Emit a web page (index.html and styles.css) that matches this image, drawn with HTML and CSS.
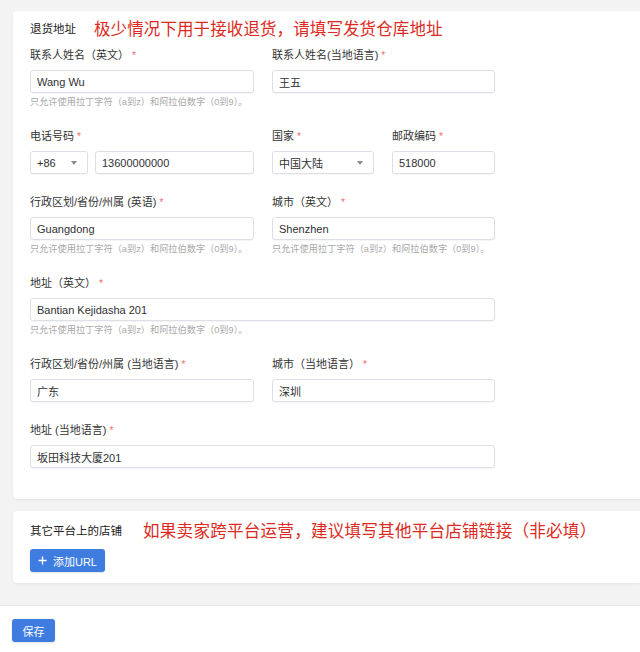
FILE: index.html
```html
<!DOCTYPE html>
<html lang="zh-CN">
<head>
<meta charset="utf-8">
<title>退货地址</title>
<link rel="stylesheet" href="styles.css">
</head>
<body>
<div class="page">
  <section class="card card-main">
    <div class="card-head">
      <span class="card-title">退货地址</span>
      <span class="note">极少情况下用于接收退货，请填写发货仓库地址</span>
    </div>
    <div class="form">
      <div class="field">
        <label class="label">联系人姓名（英文）<span class="req">*</span></label>
        <input class="input" value="Wang Wu">
        <div class="help">只允许使用拉丁字符（a到z）和阿拉伯数字（0到9）。</div>
      </div>
      <div class="field">
        <label class="label">联系人姓名(当地语言)<span class="req">*</span></label>
        <input class="input" value="王五">
      </div>

      <div class="field">
        <label class="label">电话号码<span class="req">*</span></label>
        <div class="phone">
          <div class="select select-code"><span>+86</span><span class="caret"></span></div>
          <input class="input" value="13600000000">
        </div>
      </div>
      <div class="field-pair">
        <div class="field">
          <label class="label">国家<span class="req">*</span></label>
          <div class="select"><span>中国大陆</span><span class="caret"></span></div>
        </div>
        <div class="field">
          <label class="label">邮政编码<span class="req">*</span></label>
          <input class="input" value="518000">
        </div>
      </div>

      <div class="field">
        <label class="label">行政区划/省份/州属 (英语)<span class="req">*</span></label>
        <input class="input" value="Guangdong">
        <div class="help">只允许使用拉丁字符（a到z）和阿拉伯数字（0到9）。</div>
      </div>
      <div class="field">
        <label class="label">城市（英文）<span class="req">*</span></label>
        <input class="input" value="Shenzhen">
        <div class="help">只允许使用拉丁字符（a到z）和阿拉伯数字（0到9）。</div>
      </div>

      <div class="field field-wide">
        <label class="label">地址（英文）<span class="req">*</span></label>
        <input class="input" value="Bantian Kejidasha 201">
        <div class="help">只允许使用拉丁字符（a到z）和阿拉伯数字（0到9）。</div>
      </div>

      <div class="field">
        <label class="label">行政区划/省份/州属 (当地语言)<span class="req">*</span></label>
        <input class="input" value="广东">
      </div>
      <div class="field">
        <label class="label">城市（当地语言）<span class="req">*</span></label>
        <input class="input" value="深圳">
      </div>

      <div class="field field-wide">
        <label class="label">地址 (当地语言)<span class="req">*</span></label>
        <input class="input" value="坂田科技大厦201">
      </div>
    </div>
  </section>

  <section class="card card-shops">
    <div class="card-head">
      <span class="card-title">其它平台上的店铺</span>
      <span class="note note-2">如果卖家跨平台运营，建议填写其他平台店铺链接（非必填）</span>
    </div>
    <button class="btn btn-add" type="button">
      <svg class="plus" width="9" height="9" viewBox="0 0 9 9"><path d="M4.5 0.5v8M0.5 4.5h8" stroke="#fff" stroke-width="1.4" fill="none"/></svg>
      <span>添加URL</span>
    </button>
  </section>
</div>
<footer class="footer">
  <button class="btn btn-save" type="button">保存</button>
</footer>
</body>
</html>
```
FILE: styles.css
```css
* { box-sizing: border-box; }

html, body {
  margin: 0;
  background: #ffffff;
}

body {
  font-family: "Liberation Sans", "Noto Sans CJK SC", sans-serif;
  color: #303133;
}

.page {
  background: #f3f3f4;
  padding: 11px 0 22px 13px;
}

.card {
  background: #ffffff;
  border-radius: 4px 0 0 4px;
  box-shadow: 0 1px 3px rgba(0, 0, 0, 0.06);
}

.card-main {
  padding: 7px 0 31px 17px;
}

.card-shops {
  margin-top: 12px;
  padding: 9px 0 11px 17px;
}

.card-head {
  display: flex;
  align-items: center;
  height: 20px;
  margin-bottom: 10px;
}

.card-shops .card-head {
  margin-bottom: 9px;
}

.card-title {
  font-size: 11.5px;
  color: #222;
  margin-right: 18px;
  white-space: nowrap;
}

.card-shops .card-title {
  margin-right: 21px;
}

.note {
  font-size: 16.5px;
  color: #dc2a22;
  white-space: nowrap;
  letter-spacing: 0.1px;
}

.note-2 {
  font-size: 16.6px;
  letter-spacing: 0.2px;
}

.form {
  display: grid;
  grid-template-columns: 224px 223px;
  column-gap: 18px;
  row-gap: 21px;
  align-items: start;
}

.field {
  display: flex;
  flex-direction: column;
  min-width: 0;
}

.field-wide {
  grid-column: 1 / 3;
}

.field-pair {
  display: grid;
  grid-template-columns: 102px 103px;
  column-gap: 18px;
}

.label {
  display: block;
  height: 14px;
  line-height: 14px;
  font-size: 11px;
  color: #333;
  margin-bottom: 8px;
  white-space: nowrap;
}

.req {
  color: #ee6b6b;
  font-size: 10px;
  margin-left: 3px;
}

.input {
  display: block;
  width: 100%;
  height: 23px;
  border: 1px solid #dcdfe6;
  border-radius: 3px;
  padding: 0 6px;
  font-family: inherit;
  font-size: 11px;
  color: #303133;
  background: #fff;
  outline: none;
  box-shadow: 0 1px 1px rgba(0, 0, 0, 0.04);
}

.help {
  margin-top: 3px;
  line-height: 12px;
  font-size: 9.2px;
  color: #a9a9a9;
  white-space: nowrap;
}

.phone {
  display: flex;
  gap: 7px;
}

.select {
  display: flex;
  align-items: center;
  justify-content: space-between;
  height: 23px;
  border: 1px solid #dcdfe6;
  border-radius: 3px;
  padding: 0 10px 0 6px;
  font-size: 11px;
  color: #303133;
  background: #fff;
  box-shadow: 0 1px 1px rgba(0, 0, 0, 0.04);
}

.select-code {
  flex: 0 0 58px;
}

.caret {
  width: 0;
  height: 0;
  border-left: 3.5px solid transparent;
  border-right: 3.5px solid transparent;
  border-top: 4px solid #8a8a8a;
}

.btn {
  display: inline-flex;
  align-items: center;
  justify-content: center;
  height: 23px;
  border: 0;
  border-radius: 3px;
  background: #3e7ce0;
  color: #fff;
  font-family: inherit;
  font-size: 11px;
  padding: 0;
  box-shadow: 0 1px 2px rgba(0, 0, 0, 0.12);
}

.btn-add {
  width: 75px;
  gap: 6px;
}

.plus {
  display: block;
}

.footer {
  border-top: 1px solid #e9e9ea;
  background: #fff;
  padding: 13px 12px 20px;
}

.btn-save {
  width: 43px;
}
```
